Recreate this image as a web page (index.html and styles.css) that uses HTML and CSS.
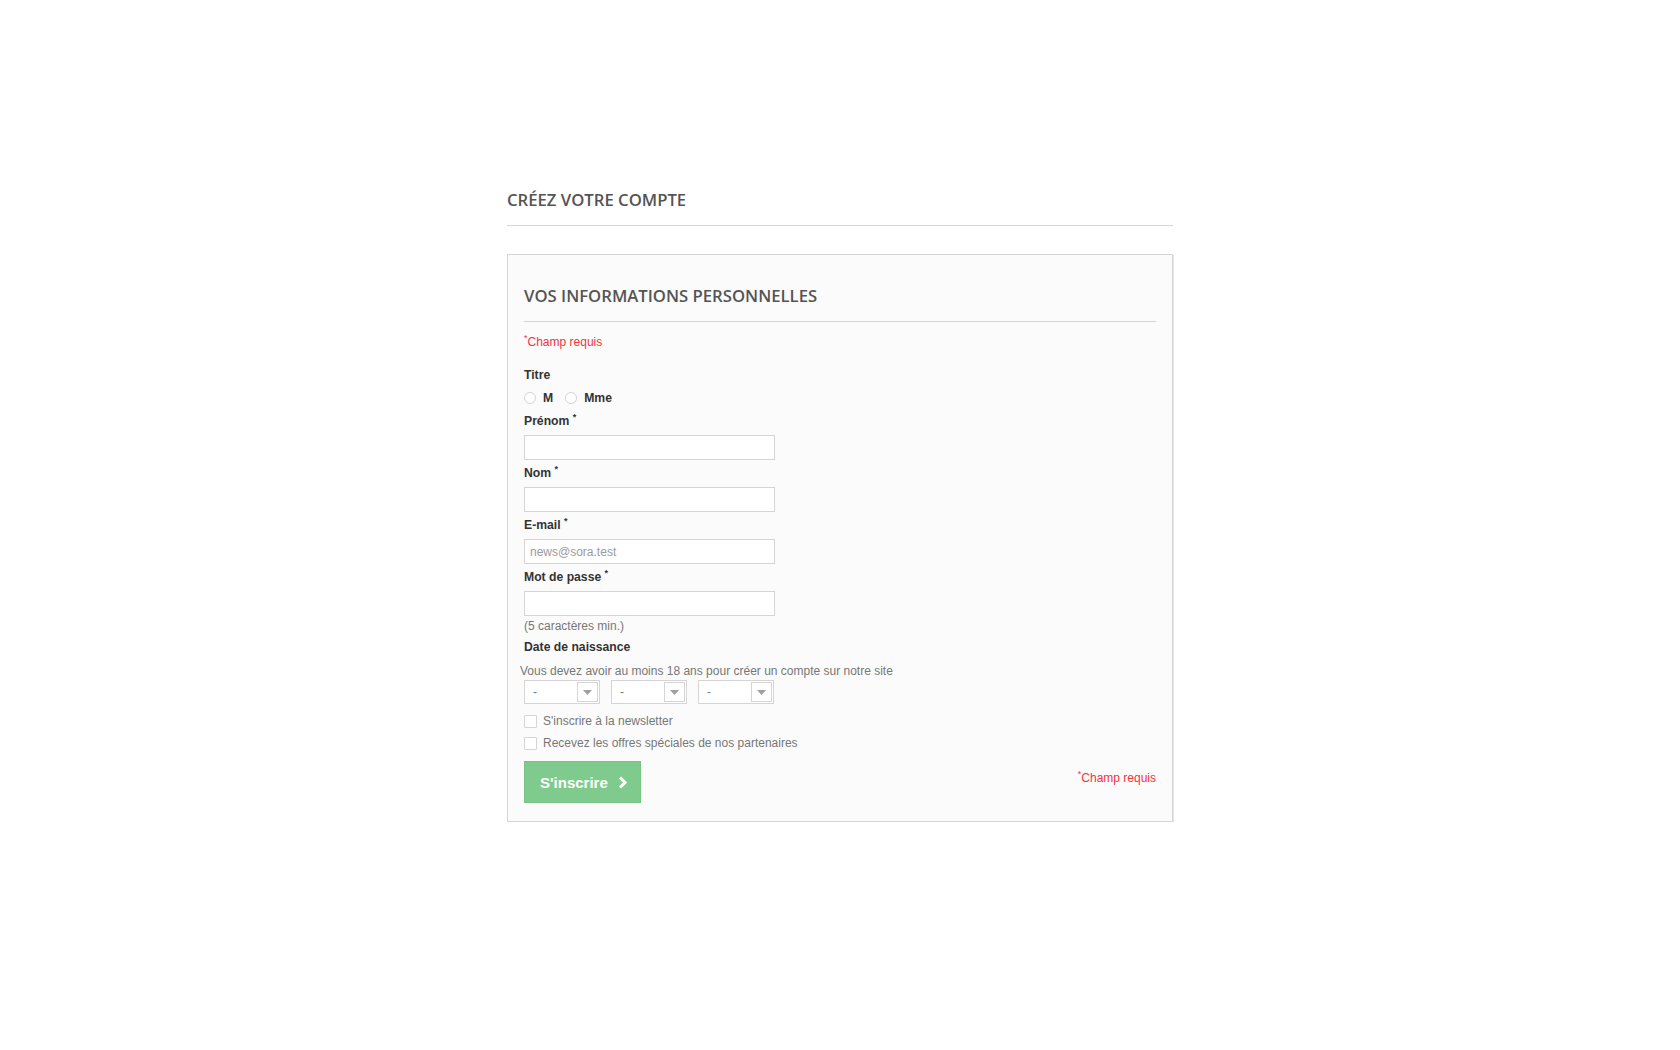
FILE: index.html
```html
<!DOCTYPE html>
<html lang="fr">
<head>
<meta charset="utf-8">
<title>Créez votre compte</title>
<link rel="stylesheet" href="styles.css">
</head>
<body>
<div class="page">
  <h1 class="page-heading">Créez votre compte</h1>
  <form class="box">
    <h3 class="page-subheading">Vos informations personnelles</h3>
    <p class="required"><sup>*</sup>Champ requis</p>

    <div class="field">
      <div class="label">Titre</div>
      <div class="radios">
        <label class="radio"><input type="radio" name="gender"><span>M</span></label>
        <label class="radio"><input type="radio" name="gender"><span>Mme</span></label>
      </div>
    </div>

    <div class="group">
      <label class="label">Prénom <sup>*</sup></label>
      <input class="text" type="text">
    </div>
    <div class="group">
      <label class="label">Nom <sup>*</sup></label>
      <input class="text" type="text">
    </div>
    <div class="group">
      <label class="label">E-mail <sup>*</sup></label>
      <input class="text" type="text" placeholder="news@sora.test">
    </div>
    <div class="group pw">
      <label class="label">Mot de passe <sup>*</sup></label>
      <input class="text" type="password">
      <span class="hint">(5 caractères min.)</span>
    </div>

    <div class="birth">
      <div class="label">Date de naissance</div>
      <p class="note">Vous devez avoir au moins 18 ans pour créer un compte sur notre site</p>
      <div class="selects">
        <div class="select"><span class="val">-</span><span class="arrow"><svg width="9" height="5" viewBox="0 0 9 5"><path d="M0 0H9L4.5 5Z" fill="#a0a0a0"/></svg></span></div>
        <div class="select"><span class="val">-</span><span class="arrow"><svg width="9" height="5" viewBox="0 0 9 5"><path d="M0 0H9L4.5 5Z" fill="#a0a0a0"/></svg></span></div>
        <div class="select"><span class="val">-</span><span class="arrow"><svg width="9" height="5" viewBox="0 0 9 5"><path d="M0 0H9L4.5 5Z" fill="#a0a0a0"/></svg></span></div>
      </div>
    </div>

    <label class="check first"><input type="checkbox"><span>S'inscrire à la newsletter</span></label>
    <label class="check"><input type="checkbox"><span>Recevez les offres spéciales de nos partenaires</span></label>

    <div class="submit">
      <button type="button" class="btn">S'inscrire<svg width="10" height="13" viewBox="0 0 10 13"><path d="M2 1.5L7 6.5L2 11.5" fill="none" stroke="#fff" stroke-width="3"/></svg></button>
      <p class="required right"><sup>*</sup>Champ requis</p>
    </div>
  </form>
</div>
</body>
</html>
```

FILE: styles.css
```css
html, body {
  margin: 0;
  padding: 0;
  background: #ffffff;
}

body {
  font-family: "Liberation Sans", Arial, sans-serif;
  font-size: 12px;
  line-height: 18px;
  color: #333333;
}

.page {
  width: 666px;
  margin: 188px auto 0;
}

.page-heading {
  font-family: "Open Sans", sans-serif;
  font-weight: 600;
  font-size: 16.7px;
  line-height: 23px;
  text-transform: uppercase;
  color: #555454;
  margin: 0 0 28px;
  padding: 0 0 14px;
  border-bottom: 1px solid #d6d4d4;
}

.box {
  display: block;
  background: #fbfbfb;
  border: 1px solid #d6d4d4;
  box-shadow: 1px 1px 0 #e4e4e4;
  padding: 30px 16px 18px;
}

.page-subheading {
  font-family: "Open Sans", sans-serif;
  font-weight: 600;
  font-size: 16.7px;
  line-height: 22px;
  text-transform: uppercase;
  color: #555454;
  margin: 0 0 11px;
  padding: 0 0 14px;
  border-bottom: 1px solid #d6d4d4;
}

sup {
  font-size: 9px;
  line-height: 0;
  vertical-align: 5px;
}

.required {
  margin: 0 0 15px;
  color: #f13340;
}

.label {
  display: block;
  font-weight: bold;
  font-size: 12.2px;
  color: #333333;
}

.field .label {
  margin-bottom: 5px;
}

.radios {
  display: flex;
  gap: 12px;
  margin-bottom: 5px;
}

.radio {
  display: flex;
  align-items: center;
  gap: 7px;
  font-weight: bold;
  font-size: 12.2px;
  color: #333333;
}

.radio input {
  appearance: none;
  -webkit-appearance: none;
  margin: 0;
  width: 12px;
  height: 12px;
  border: 1px solid #d6d4d4;
  border-radius: 50%;
  background: #ffffff;
}

.group {
  margin-bottom: 4px;
}

.group .label {
  margin-bottom: 5px;
}

.text {
  display: block;
  box-sizing: border-box;
  width: 251px;
  height: 25px;
  margin: 0;
  padding: 0 5px;
  border: 1px solid #d6d4d4;
  background: #ffffff;
  font-family: "Liberation Sans", Arial, sans-serif;
  font-size: 12px;
  color: #9c9b9b;
  outline: none;
}

.text::placeholder {
  color: #9c9b9b;
}

.group.pw {
  margin-bottom: 3px;
}

.hint {
  display: block;
  padding-top: 1px;
  color: #777777;
}

.birth .label {
  margin-bottom: 6px;
}

.note {
  margin: 0 0 0 -4px;
  color: #777777;
}

.selects {
  display: flex;
  gap: 11px;
}

.select {
  box-sizing: border-box;
  width: 76px;
  height: 24px;
  display: flex;
  border: 1px solid #d6d4d4;
  background: #ffffff;
}

.select .val {
  flex: 1;
  padding-left: 8px;
  line-height: 22px;
  color: #777777;
}

.select .arrow {
  box-sizing: border-box;
  width: 21px;
  margin: 1px 1px 1px 0;
  border: 1px solid #d6d4d4;
  display: flex;
  align-items: center;
  justify-content: center;
  background: #ffffff;
}

.check {
  display: flex;
  align-items: center;
  gap: 6px;
  color: #777777;
  margin-top: 4px;
}

.check.first {
  margin-top: 8px;
}

.check input {
  appearance: none;
  -webkit-appearance: none;
  margin: 0;
  width: 13px;
  height: 13px;
  border: 1px solid #d6d4d4;
  background: #ffffff;
  border-radius: 1px;
}

.submit {
  display: flex;
  justify-content: space-between;
  align-items: flex-start;
  margin-top: 9px;
}

.btn {
  box-sizing: border-box;
  height: 42px;
  width: 117px;
  display: flex;
  align-items: center;
  gap: 10px;
  padding: 0 0 0 15px;
  margin: 0;
  border: 1px solid #76c585;
  background: #7fcb8d;
  color: #ffffff;
  font-family: "Liberation Sans", Arial, sans-serif;
  font-weight: bold;
  font-size: 15px;
  cursor: pointer;
}

.required.right {
  margin: 8px 0 0;
}
```
